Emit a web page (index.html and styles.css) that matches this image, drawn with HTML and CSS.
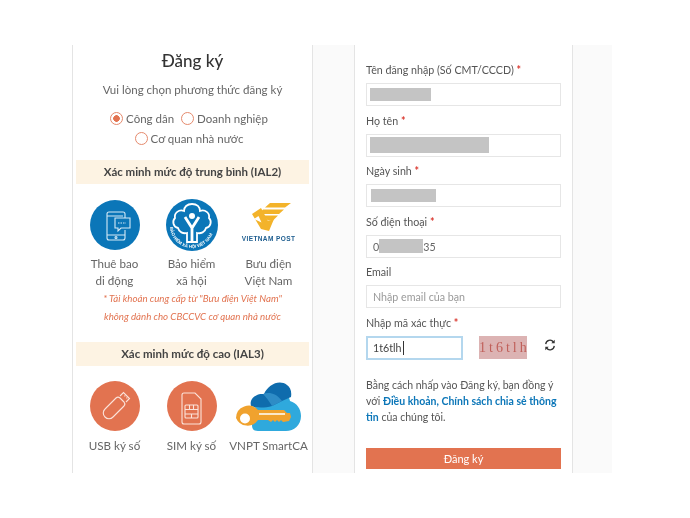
FILE: index.html
```html
<!DOCTYPE html>
<html lang="vi">
<head>
<meta charset="utf-8">
<title>Đăng ký</title>
<link rel="stylesheet" href="styles.css">
</head>
<body>
<main class="stage">
  <section class="card left">
    <h1 class="title">Đăng ký</h1>
    <p class="subtitle">Vui lòng chọn phương thức đăng ký</p>
    <div class="radios">
      <div class="radio-row">
        <span class="radio"><i class="dot on"></i>Công dân</span>
        <span class="radio"><i class="dot"></i>Doanh nghiệp</span>
      </div>
      <div class="radio-row">
        <span class="radio"><i class="dot"></i>Cơ quan nhà nước</span>
      </div>
    </div>
    <div class="banner">Xác minh mức độ trung bình (IAL2)</div>
    <div class="methods">
      <div class="method">
        <svg class="ico" viewBox="0 0 50 50"><circle cx="25" cy="25" r="25" fill="#0b76b8"/><g fill="none" stroke="#d5e9f6" stroke-width="1.100"><path d="M35 30v8a2 2 0 0 1-2 2H19a2 2 0 0 1-2-2V14a2 2 0 0 1 2-2h14a2 2 0 0 1 2 2v4"/><path d="M17 16h16M17 35h18"/><circle cx="26" cy="37.500" r="1"/><path d="M25 18h15v10h-9l-3 3v-3h-3z" fill="#0b76b8"/><path d="M28 23h8" stroke-dasharray="1.500 1"/></g></svg>
        <div class="cap">Thuê bao<br>di động</div>
      </div>
      <div class="method">
        <svg class="ico big" viewBox="0 0 52 52"><circle cx="26" cy="26" r="26" fill="#0b76b8"/><path d="M26 5c5 0 8 3 8 7 5-2 10 2 9 7 3 3 2 9-3 10-1 4-5 6-9 5v9h-10v-9c-4 1-8-1-9-5-5-1-6-7-3-10-1-5 4-9 9-7 0-4 3-7 8-7z" fill="#0b76b8" stroke="#fff" stroke-width="1.800"/><path d="M26 43V28M26 29l-7-11M26 29l7-11" stroke="#fff" stroke-width="2.800" fill="none"/><circle cx="26" cy="17" r="3" fill="#fff"/><path id="arc" d="M4 27a22 22 0 0 0 44 0" fill="none"/><text class="arc-text"><textPath href="#arc" startOffset="1">BẢO HIỂM XÃ HỘI VIỆT NAM</textPath></text></svg>
        <div class="cap">Bảo hiểm<br>xã hội</div>
      </div>
      <div class="method">
        <div class="post">
          <svg class="post-mark" viewBox="0 0 46 30"><path d="M24 0h21l-6 4.500H19zM17 6.500h21l-5 4.500H12.500zM17 12.500h15l-5 5h-5z" fill="#f3b32a"/><path d="M6 11l9-6 7 13 6-2-5 12-8-2z" fill="#f3b32a"/><path d="M8 16l4.500-3 3 6.500z" fill="#fff"/></svg>
          <div class="post-name">VIETNAM POST</div>
        </div>
        <div class="cap">Bưu điện<br>Việt Nam</div>
      </div>
    </div>
    <p class="note">* Tài khoản cung cấp từ "Bưu điện Việt Nam"<br>không dành cho CBCCVC cơ quan nhà nước</p>
    <div class="banner second">Xác minh mức độ cao (IAL3)</div>
    <div class="methods high">
      <div class="method">
        <svg class="ico" viewBox="0 0 50 50"><circle cx="25" cy="25" r="25" fill="#e27350"/><g fill="none" stroke="#fbe3da" stroke-width="1.100"><path d="M15 28l11-11a3 3 0 0 1 4 0l4 4a3 3 0 0 1 0 4L23 36a5.500 5.500 0 0 1-8 0 5.500 5.500 0 0 1 0-8z"/><path d="M30 15l3.500-3.500 6 6L36 21"/><path d="M34.500 14.500l.8.8M36.500 16.500l.8.8"/></g></svg>
        <div class="cap">USB ký số</div>
      </div>
      <div class="method">
        <svg class="ico" viewBox="0 0 50 50"><circle cx="25" cy="25" r="25" fill="#e27350"/><g fill="none" stroke="#fbe3da" stroke-width="1.100"><path d="M17 12h11l6 6v23a2 2 0 0 1-2 2H17a2 2 0 0 1-2-2V14a2 2 0 0 1 2-2z"/><rect x="18" y="24" width="13" height="13" rx="1"/><path d="M18 28.500h13M18 33h13M22.500 24v4.500M26.500 24v4.500M24.500 33v4"/></g></svg>
        <div class="cap">SIM ký số</div>
      </div>
      <div class="method">
        <svg class="smartca" viewBox="0 0 65 50"><path d="M36 10c9-2 17 3 18 10 7 2 11 8 11 15 0 9-7 15-15 15H22c-5 0-6-3-6-6l4-24z" fill="#2fa9dd"/><path d="M15 25c-2-7 5-13 13-12 4-9 15-15 23-9 3 2 5 6 4 12-3 1-6 3-9 4l-10 5c-7 2-16 2-21 0z" fill="#0f6cad"/><path d="M27 13c6-2 13-1 19 7l-10 5c-3-5-6-9-9-12z" fill="#2e8cc6"/><path d="M0 37a12.500 12.500 0 0 1 22-8h26l3 3 3 0 1 4-2 4-6 1-2-2-2 2-2-2-2 2-2-2-2 2-3-2H22A12.500 12.500 0 0 1 0 37z" fill="#f0a22e"/><circle cx="9" cy="37.500" r="5" fill="#fff"/><path d="M23 33h26" stroke="#fff" stroke-width="1.500"/></svg>
        <div class="cap">VNPT SmartCA</div>
      </div>
    </div>
  </section>
  <section class="card right">
    <div class="field"><label class="lbl">Tên đăng nhập (Số CMT/CCCD) <b>*</b></label><div class="input"><span class="mask m1"></span></div></div>
    <div class="field"><label class="lbl">Họ tên <b>*</b></label><div class="input"><span class="mask m2"></span></div></div>
    <div class="field"><label class="lbl">Ngày sinh <b>*</b></label><div class="input shift"><span class="mask m3"></span></div></div>
    <div class="field"><label class="lbl">Số điện thoại <b>*</b></label><div class="input phone"><span>0</span><span class="mask m4"></span><span>35</span></div></div>
    <div class="field"><label class="lbl">Email</label><div class="input ph">Nhập email của bạn</div></div>
    <div class="field"><label class="lbl">Nhập mã xác thực <b>*</b></label>
      <div class="captcha-row">
        <div class="input active">1t6tlh<i class="caret"></i></div>
        <div class="captcha">1t6tlh</div>
        <svg class="reload" viewBox="0 0 14 14"><g fill="none" stroke="#333" stroke-width="1.500"><path d="M2 6a5 5 0 0 1 9-2.500"/><path d="M12 8a5 5 0 0 1-9 2.500"/></g><path d="M12.500 1v4h-4zM1.500 13V9h4z" fill="#333"/></svg>
      </div>
    </div>
    <p class="terms">Bằng cách nhấp vào Đăng ký, bạn đồng ý với <a class="link">Điều khoản, Chính sách chia sẻ thông tin</a> của chúng tôi.</p>
    <button class="submit">Đăng ký</button>
  </section>
</main>
</body>
</html>
```
FILE: styles.css
```css
* { box-sizing: border-box; }
html, body { margin: 0; padding: 0; background: #fff; }
body { width: 690px; height: 518px; overflow: hidden; font-family: "Lato", "Noto Sans", sans-serif; color: #555; }
.stage { display: flex; gap: 41px; width: 540px; height: 428px; margin: 45px 0 0 72px; background: #fafafa; filter: blur(0.45px); }
.card { background: #fff; border: solid #e4e4e4; border-width: 0 1px; height: 428px; }
.left { width: 241px; padding: 0 3px; text-align: center; }
.right { width: 219px; padding: 0 11px; }
.title { margin: 5px 0 0; font-size: 17px; line-height: 22px; font-weight: 500; color: #333; }
.subtitle { margin: 10px 0 0; font-size: 11.500px; line-height: 16px; color: #666; }
.radios { margin-top: 10px; padding-right: 7px; }
.radio-row { display: flex; justify-content: center; gap: 7px; height: 20px; align-items: center; font-size: 11.500px; color: #666; }
.radio { display: flex; align-items: center; gap: 3px; }
.dot { width: 13px; height: 13px; border: 1px solid #e58a6d; border-radius: 50%; display: block; }
.dot.on { background: radial-gradient(circle, #e27350 0 3px, #fff 3.600px); }
.banner { height: 24px; margin-top: 12px; background: #fdf3e3; font-size: 11.500px; font-weight: 700; line-height: 24px; color: #444; }
.banner.second { margin-top: 17px; }
.methods { display: grid; grid-template-columns: repeat(3, 77px); margin-top: 15px; }
.methods.high { margin-top: 14px; }
.high .cap { margin-top: 6px; }
.method { display: flex; flex-direction: column; align-items: center; }
.ico { width: 50px; height: 50px; margin-top: 1px; display: block; }
.ico.big { width: 52px; height: 52px; margin-top: 0; margin-bottom: -1px; }
.arc-text { font-size: 4.300px; font-weight: 700; fill: #fff; font-family: "Liberation Sans", sans-serif; }
.post { height: 51px; width: 60px; display: flex; flex-direction: column; align-items: center; padding-top: 4px; }
.post-mark { width: 46px; height: 30px; display: block; }
.post-name { font-size: 6.500px; line-height: 8px; margin-top: 2px; font-weight: 700; color: #1d5d8f; white-space: nowrap; letter-spacing: .4px; font-family: "Liberation Sans", sans-serif; }
.cap { margin-top: 5px; font-size: 11.600px; line-height: 17px; color: #666; white-space: nowrap; }
.note { margin: 0; font-size: 9.700px; line-height: 18px; font-style: italic; color: #e27350; }
.smartca { width: 65px; height: 50px; display: block; margin-top: 1px; }
.lbl { display: block; height: 15px; margin-top: 6.500px; font-size: 10.700px; line-height: 15px; color: #555; }
.right .field:first-child .lbl { margin-top: 17px; }
.lbl b { color: #d9342b; font-weight: 700; }
.input { height: 23px; width: 195px; margin-top: 6px; padding: 0 3px; border: 1px solid #e6e6e6; display: flex; align-items: center; font-size: 10.700px; color: #666; }
.shift { padding-left: 4px; }
.phone { padding-left: 6px; }
.ph { padding-left: 6px; color: #999; }
.mask { display: block; height: 14px; background: #c4c4c4; }
.m1 { width: 61px; height: 13px; }
.m2 { width: 119px; height: 16px; }
.m3 { width: 65px; height: 13px; }
.m4 { width: 44px; }
.captcha-row { display: flex; align-items: flex-start; margin-top: 6px; }
.captcha-row .input { margin-top: 0; }
.active { width: 97px; height: 24px; border: 2px solid #b4d7ee; padding-left: 5px; color: #444; }
.caret { width: 1px; height: 14px; background: #333; margin-left: 1px; }
.captcha { width: 48px; height: 23px; margin-left: 16px; background: #dcb3b3; color: #c0605a; font-family: "Liberation Serif", serif; font-size: 14px; letter-spacing: 3px; line-height: 23px; text-align: center; }
.reload { width: 12px; height: 12px; margin: 3px 0 0 17px; display: block; }
.terms { margin: 17px 0 0; font-size: 10.500px; line-height: 16px; color: #555; }
.link { color: #0b76b8; font-weight: 700; }
.submit { display: block; width: 195px; height: 21px; margin-top: 23.400px; border: 0; padding: 0; background: #e27350; color: #fff; font-family: inherit; font-size: 11px; }
```
